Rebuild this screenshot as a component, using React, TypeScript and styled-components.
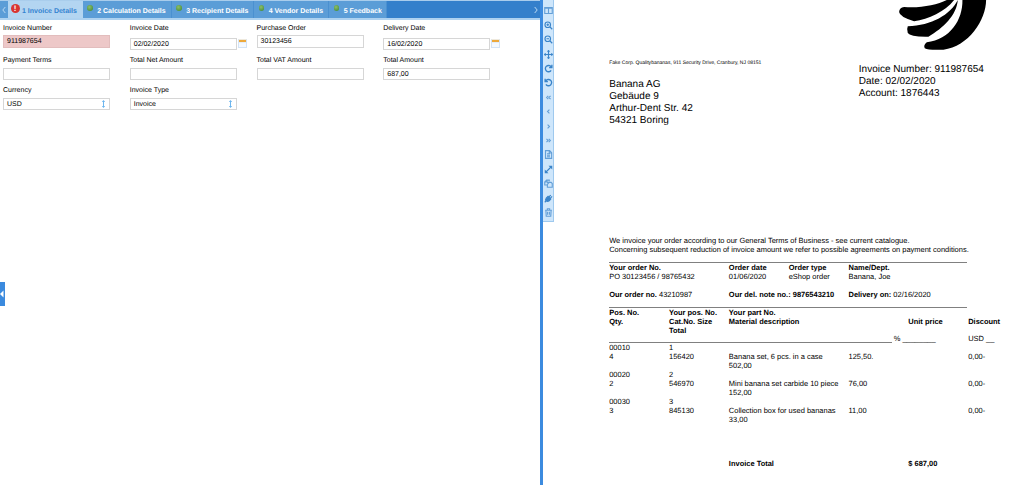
import React from "react";
import styled, { createGlobalStyle } from "styled-components";

const Global = createGlobalStyle`
  * { box-sizing: border-box; }
  body { margin: 0; background: #fff; overflow: hidden; }
  body, input, button { font-family: "Liberation Sans", Arial, sans-serif; text-rendering: geometricPrecision; }
`;

const Screen = styled.div`
  display: flex;
  width: 1024px;
  height: 485px;
  overflow: hidden;
  color: #000;
`;
const FormPanel = styled.section`
  width: 540px;
  display: flex;
  flex-direction: column;
  position: relative;
`;
const TabBar = styled.nav`
  display: flex;
  height: 20px;
  background: #3480cb;
  border-top: 1px solid #a9cdec;
  border-bottom: 2px solid #aed2f0;
`;
const Scroll = styled.div<{ $end?: boolean }>`
  width: 7.5px;
  display: flex;
  align-items: center;
  justify-content: center;
  background: ${(p) => (p.$end ? "transparent" : "#5b9dd7")};
  margin-left: ${(p) => (p.$end ? "auto" : "0")};
`;
const Tab = styled.div<{ $w: number; $active?: boolean }>`
  width: ${(p) => p.$w}px;
  display: flex;
  align-items: flex-start;
  padding-left: 3px;
  background: ${(p) => (p.$active ? "#b3d5f1" : "#5b9dd7")};
  color: ${(p) => (p.$active ? "#3483d0" : "#fff")};
  border-right: 1px solid ${(p) => (p.$active ? "#b3d5f1" : "#4a90d0")};
  font-size: 7px;
  font-weight: bold;
  white-space: nowrap;
`;
const TabText = styled.span`
  line-height: 9px;
  margin-top: 6px;
`;
const Alert = styled.span`
  width: 9px;
  height: 9px;
  margin: 2.5px 2.5px 0 0;
  border-radius: 50%;
  background: #d93532;
  color: #fff;
  font-size: 8px;
  line-height: 9px;
  text-align: center;
`;
const Dot = styled.span`
  width: 5.5px;
  height: 5.5px;
  margin: 4px 4.7px 0 1.5px;
  border-radius: 50%;
  background: radial-gradient(circle at 40% 35%, #8cbd69, #4f9440 75%);
`;
const Fields = styled.div`
  display: grid;
  grid-template-columns: repeat(4, 126.75px);
  grid-template-rows: 32.5px 30px 30px;
  padding: 3px 0 0 3px;
`;
const Field = styled.label`
  display: flex;
  flex-direction: column;
  font-size: 7px;
  line-height: 9px;
`;
const LabelText = styled.span`
  padding-top: 0.6px;
  height: 9px;
`;
const InputRow = styled.div<{ $date?: boolean }>`
  display: flex;
  align-items: center;
  margin-top: ${(p) => (p.$date ? 5.5 : 3)}px;
`;
const Box = styled.div<{ $error?: boolean }>`
  width: 107px;
  height: 12.5px;
  display: flex;
  align-items: center;
  justify-content: space-between;
  padding: 1.2px 3px 0 3px;
  border: 1px solid ${(p) => (p.$error ? "#e2bdbd" : "#d6d6d6")};
  background: ${(p) => (p.$error ? "#edc8c8" : "#fff")};
`;
const Calendar = styled.span`
  width: 9px;
  height: 9px;
  margin: -1px 0 0 1px;
  border: 1px solid #d3e3f6;
  border-top: 1px solid #efe9dc;
  background: linear-gradient(#eda93c 0 2px, #e4edfa 2px 3px, #f4f9ff 3px);
`;
const Collapser = styled.div`
  position: absolute;
  left: 0;
  top: 282px;
  width: 5px;
  height: 24px;
  background: #3b8ade;
  display: flex;
  align-items: center;
`;
const Splitter = styled.div`
  width: 3.3px;
  background: #3c8bdf;
`;
const Tools = styled.aside`
  width: 10.6px;
  height: 221.5px;
  padding-top: 3.7px;
  display: flex;
  flex-direction: column;
  align-items: center;
  background: #cee6fb;
  border-right: 1px solid #9fc9ee;
  border-bottom: 1px solid #9fc9ee;
`;
const Tool = styled.span`
  height: 14.42px;
  display: flex;
  align-items: center;
`;
const Page = styled.main`
  width: 470px;
  padding-left: 55.3px;
  font-size: 7.48px;
  position: relative;
`;
const Head = styled.header`
  display: grid;
  grid-template-columns: 249.6px 1fr;
  height: 235.5px;
`;
const Sender = styled.div`
  padding-top: 59.5px;
`;
const SenderLine = styled.div`
  font-size: 5.04px;
  line-height: 7px;
  white-space: nowrap;
`;
const Address = styled.div`
  margin-top: 12.1px;
  font-size: 10.04px;
  line-height: 12.1px;
`;
const Meta = styled.div`
  font-size: 10.02px;
  line-height: 12.1px;
`;
const Logo = styled.svg`
  display: block;
  margin: 0 0 12.2px 40px;
`;
const Line = styled.div<{ $h?: number; $bold?: boolean }>`
  display: grid;
  grid-template-columns: repeat(7, 59.83px);
  height: ${(p) => p.$h ?? 8.9}px;
  line-height: 9px;
  white-space: nowrap;
  font-weight: ${(p) => (p.$bold ? "bold" : "normal")};
`;
const TotalLine = styled(Line)`
  padding-top: 36px;
`;
const Cell = styled.span<{ $col: number }>`
  grid-row: 1;
  grid-column: ${(p) => p.$col};
`;
const Rule = styled.div<{ $w: number }>`
  width: ${(p) => p.$w}px;
  height: 1px;
  background: #808080;
`;
const Percent = styled.span`
  grid-row: 1;
  grid-column: 5;
  padding-left: 45.2px;
`;
const Terms = styled.p`
  margin: 0;
  height: 26.5px;
  line-height: 9.7px;
  white-space: nowrap;
`;

const icons: React.ReactNode[] = [
  <><path d="M1 2h10v8H1zM6 2v8M1 3h10" /></>,
  <><circle cx="5" cy="5" r="3.7" /><path d="M8 8l3 3M3.3 5h3.4M5 3.3v3.4" /></>,
  <><circle cx="5" cy="5" r="3.7" /><path d="M8 8l3 3M3.3 5h3.4" /></>,
  <><path d="M6 1v10M1 6h10M4.6 2.2L6 .8 7.4 2.2M4.6 9.8L6 11.2 7.4 9.8M2.2 4.6L.8 6 2.2 7.4M9.8 4.6L11.2 6 9.8 7.4" /></>,
  <><path d="M9.5 8.5A4.2 4.2 0 1 1 9.5 3.8M10.5 1v3.8H6.8" strokeWidth="1.8" /></>,
  <><path d="M2.5 8.5A4.2 4.2 0 1 0 2.5 3.8M1.5 1v3.8h3.7" strokeWidth="1.8" /></>,
  <><path d="M5.7 3.8L3.5 6l2.2 2.2M8.7 3.8L6.5 6l2.2 2.2" /></>,
  <><path d="M7.2 3.5L4.7 6l2.5 2.5" /></>,
  <><path d="M4.8 3.5L7.3 6 4.8 8.5" /></>,
  <><path d="M3.3 3.8L5.5 6 3.3 8.2M6.3 3.8L8.5 6 6.3 8.2" /></>,
  <><path d="M2 .8h5.5l2.7 2.7v7.7H2zM4 5h4M4 7h4M4 9h4M7 1v3h3" /></>,
  <><path d="M2 10l8-8" strokeWidth="1.5" /><path d="M6 1h5v5zM1 6v5h5z" fill="currentColor" stroke="none" /></>,
  <><path d="M4 8H1V4l2.500-2.500H7V3M4 4.500h5.500L11 6v5H4.500V7L7 4.500M1 4h3V1.500" /></>,
  <><path d="M3.2 5.200L5.400 3.200 9 6.800 7 9C5.500 10 3.800 9.700 3 9S2.200 6.500 3.200 5.200z" fill="currentColor" /><path d="M1 11l2-2M6.5 4l2.500-2.500M8.300 5.800l2.500-2.500" strokeWidth="1.5" /></>,
  <><path d="M1.500 3h9M4.500 2.500V1h3v1.500M2.500 3l.5 8h6l.5-8M4.800 5v4M7.200 5v4" /></>,
];
const vivid = [1, 2, 3, 4, 5, 11, 13];

const tabs = [
  { text: "2 Calculation Details", w: 89 },
  { text: "3 Recipient Details", w: 82.5 },
  { text: "4 Vendor Details", w: 75 },
  { text: "5 Feedback", w: 58 },
];

type FieldData = { label: string; value?: string; kind?: "date" | "select" | "error" };
const fields: FieldData[] = [
  { label: "Invoice Number", value: "911987654", kind: "error" },
  { label: "Invoice Date", value: "02/02/2020", kind: "date" },
  { label: "Purchase Order", value: "30123456" },
  { label: "Delivery Date", value: "16/02/2020", kind: "date" },
  { label: "Payment Terms" },
  { label: "Total Net Amount" },
  { label: "Total VAT Amount" },
  { label: "Total Amount", value: "687,00" },
  { label: "Currency", value: "USD", kind: "select" },
  { label: "Invoice Type", value: "Invoice", kind: "select" },
];

const items = [
  { pos: "00010", qty: "4", n: "1", cat: "156420", name: "Banana set, 6 pcs. in a case", price: "125,50.", total: "502,00" },
  { pos: "00020", qty: "2", n: "2", cat: "546970", name: "Mini banana set carbide 10 piece", price: "76,00", total: "152,00" },
  { pos: "00030", qty: "3", n: "3", cat: "845130", name: "Collection box for used bananas", price: "11,00", total: "33,00" },
];

const Chevron = ({ right }: { right?: boolean }) => (
  <svg width="4" height="8" viewBox="0 0 4 8" fill="none" stroke="#b9d8f2" strokeWidth="1">
    <path d={right ? "M.7 1L3.2 4 .7 7" : "M3.3 1L.8 4l2.500 3"} />
  </svg>
);

export default function App() {
  return (
    <Screen>
      <Global />
      <FormPanel>
        <TabBar>
          <Scroll><Chevron /></Scroll>
          <Tab $w={75} $active><Alert>!</Alert><TabText>1 Invoice Details</TabText></Tab>
          {tabs.map((t) => (
            <Tab key={t.text} $w={t.w}><Dot /><TabText>{t.text}</TabText></Tab>
          ))}
          <Scroll $end><Chevron right /></Scroll>
        </TabBar>
        <Fields>
          {fields.map((f) => (
            <Field key={f.label}>
              <LabelText>{f.label}</LabelText>
              <InputRow $date={f.kind === "date"}>
                <Box $error={f.kind === "error"}>
                  <span>{f.value}</span>
                  {f.kind === "select" && (
                    <svg width="5" height="8" viewBox="0 0 5 8" fill="none" stroke="#5eaeec" strokeWidth=".9">
                      <path d="M2.500 1v6M1.200 1.700L2.500 .6 3.800 1.700M1.200 6.300L2.500 7.400 3.800 6.300" />
                    </svg>
                  )}
                </Box>
                {f.kind === "date" && <Calendar />}
              </InputRow>
            </Field>
          ))}
        </Fields>
        <Collapser>
          <svg width="4" height="8" viewBox="0 0 4 8"><path d="M3.500 .5v7L0 4z" fill="#fff" /></svg>
        </Collapser>
      </FormPanel>
      <Splitter />
      <Tools>
        {icons.map((icon, i) => (
          <Tool key={i}>
            <svg width="9" height="9" viewBox="0 0 12 12" fill="none" color={vivid.includes(i) ? "#3a84c9" : "#649fd7"} stroke="currentColor" strokeWidth="1.5">
              {icon}
            </svg>
          </Tool>
        ))}
      </Tools>
      <Page>
        <Head>
          <Sender>
            <SenderLine>Fake Corp. Qualitybananas, 911 Security Drive, Cranbury, NJ 08151</SenderLine>
            <Address>Banana AG<br />Gebäude 9<br />Arthur-Dent Str. 42<br />54321 Boring</Address>
          </Sender>
          <Meta>
            <Logo width="90" height="52" viewBox="26.7 0 270 156">
              <path d="M170 0C140 15 90 25 42 21Q28 22 27 36Q28 50 72 64C115 57 165 35 192 0Z" />
              <path d="M203 0C180 45 125 76 53 79Q49 88 53 99Q60 111 115 110C160 84 200 45 203 0Z" />
              <path d="M217 0C218 60 180 118 110 127Q99 136 104 145Q115 151 160 149C235 140 288 60 288 0Z" />
            </Logo>
            Invoice Number: 911987654<br />Date: 02/02/2020<br />Account: 1876443
          </Meta>
        </Head>
        <Terms>
          We invoice your order according to our General Terms of Business - see current catalogue.<br />
          Concerning subsequent reduction of invoice amount we refer to possible agreements on payment conditions.
        </Terms>
        <Rule $w={357.5} />
        <Line $bold $h={9.2}>
          <Cell $col={1}>Your order No.</Cell><Cell $col={3}>Order date</Cell><Cell $col={4}>Order type</Cell><Cell $col={5}>Name/Dept.</Cell>
        </Line>
        <Line $h={17.8}>
          <Cell $col={1}>PO 30123456 / 98765432</Cell><Cell $col={3}>01/06/2020</Cell><Cell $col={4}>eShop order</Cell><Cell $col={5}>Banana, Joe</Cell>
        </Line>
        <Line $h={17}>
          <Cell $col={1}><b>Our order no.</b> 43210987</Cell><Cell $col={3}><b>Our del. note no.: 9876543210</b></Cell><Cell $col={5}><b>Delivery on:</b> 02/16/2020</Cell>
        </Line>
        <Rule $w={357.5} />
        <Line $bold $h={9}>
          <Cell $col={1}>Pos. No.</Cell><Cell $col={2}>Your pos. No.</Cell><Cell $col={3}>Your part No.</Cell>
        </Line>
        <Line $bold>
          <Cell $col={1}>Qty.</Cell><Cell $col={2}>Cat.No. Size</Cell><Cell $col={3}>Material description</Cell><Cell $col={6}>Unit price</Cell><Cell $col={7}>Discount</Cell>
        </Line>
        <Line $bold $h={8.5}><Cell $col={2}>Total</Cell></Line>
        <Line $h={8}><Percent>% ________</Percent><Cell $col={7}>USD __</Cell></Line>
        <Rule $w={283} />
        {items.map((it) => (
          <React.Fragment key={it.pos}>
            <Line><Cell $col={1}>{it.pos}</Cell><Cell $col={2}>{it.n}</Cell></Line>
            <Line>
              <Cell $col={1}>{it.qty}</Cell><Cell $col={2}>{it.cat}</Cell><Cell $col={3}>{it.name}</Cell><Cell $col={5}>{it.price}</Cell><Cell $col={7}>0,00-</Cell>
            </Line>
            <Line><Cell $col={3}>{it.total}</Cell></Line>
          </React.Fragment>
        ))}
        <TotalLine $bold $h={46}>
          <Cell $col={3}>Invoice Total</Cell><Cell $col={6}>$ 687,00</Cell>
        </TotalLine>
      </Page>
    </Screen>
  );
}
